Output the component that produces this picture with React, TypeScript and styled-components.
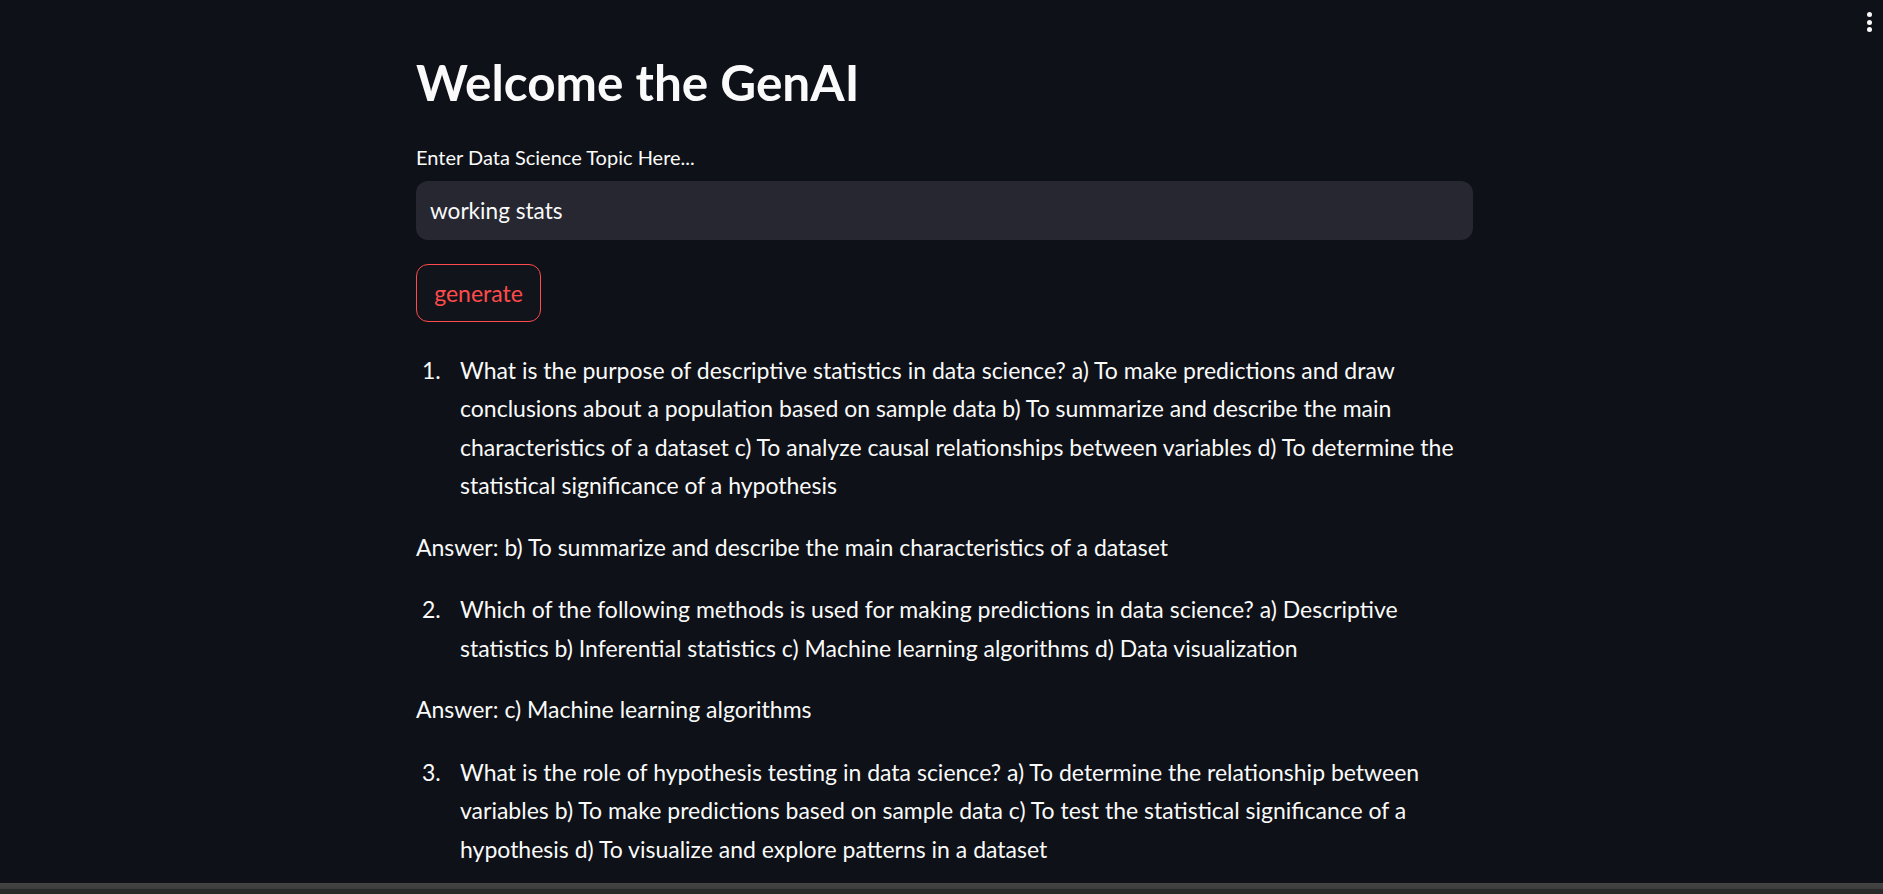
import React from "react";
import styled, { createGlobalStyle } from "styled-components";

const Global = createGlobalStyle`
  html, body { margin: 0; padding: 0; background: #0e1117; }
  body { font-family: Lato, "Noto Sans", sans-serif; color: #fafafa; overflow: hidden; }
  * { box-sizing: border-box; }
`;

const Page = styled.div`
  display: flex;
  flex-direction: column;
  height: 100vh;
  background: #0e1117;
`;

const Main = styled.main`
  flex: 1;
  overflow: hidden;
  position: relative;
`;

const Container = styled.div`
  width: 1057px;
  margin-left: calc(50% - 526.5px + 1px);
  padding-top: 50px;
`;

const Title = styled.h1`
  margin: 0;
  font-size: 49.5px;
  line-height: 65px;
  font-weight: 700;
`;

const Label = styled.label`
  display: block;
  margin-top: 28px;
  font-size: 20px;
  line-height: 28px;
`;

const Input = styled.input`
  display: block;
  width: 100%;
  height: 59px;
  margin-top: 10px;
  border: none;
  outline: none;
  border-radius: 12px;
  background: #262730;
  color: #fafafa;
  font-family: inherit;
  font-size: 22.6px;
  padding: 0 14px;
`;

const Button = styled.button`
  display: block;
  width: 125px;
  height: 58px;
  margin-top: 24px;
  border: 1px solid #ff4b4b;
  border-radius: 12px;
  background: #11141a;
  color: #ff4b4b;
  font-family: inherit;
  font-size: 23px;
  padding: 0;
`;

const List = styled.ol`
  margin: 0;
  padding: 0;
  list-style: none;
`;

const Item = styled.li`
  display: grid;
  grid-template-columns: 44px 1fr;
  font-size: 23px;
  line-height: 38.5px;
`;

const Num = styled.span`
  padding-left: 6px;
`;

const Para = styled.p<{ $top: number }>`
  margin: ${(p) => p.$top}px 0 0;
  font-size: 23px;
  line-height: 38.5px;
`;

const Block = styled.div<{ $top: number }>`
  margin-top: ${(p) => p.$top}px;
`;

const Menu = styled.div`
  position: absolute;
  top: 12px;
  right: 11px;
  display: flex;
  flex-direction: column;
  gap: 2.5px;
`;

const Dot = styled.span`
  width: 5px;
  height: 5px;
  border-radius: 50%;
  background: #fafafa;
`;

const HScroll = styled.div`
  height: 11px;
  flex: none;
  background: linear-gradient(#454545 0, #3d3d3d 6px, #2a2a2a 6px, #2a2a2a 100%);
`;

const items = [
  {
    n: 1,
    q: "What is the purpose of descriptive statistics in data science? a) To make predictions and draw conclusions about a population based on sample data b) To summarize and describe the main characteristics of a dataset c) To analyze causal relationships between variables d) To determine the statistical significance of a hypothesis",
    a: "Answer: b) To summarize and describe the main characteristics of a dataset",
  },
  {
    n: 2,
    q: "Which of the following methods is used for making predictions in data science? a) Descriptive statistics b) Inferential statistics c) Machine learning algorithms d) Data visualization",
    a: "Answer: c) Machine learning algorithms",
  },
  {
    n: 3,
    q: "What is the role of hypothesis testing in data science? a) To determine the relationship between variables b) To make predictions based on sample data c) To test the statistical significance of a hypothesis d) To visualize and explore patterns in a dataset",
    a: "",
  },
];

export default function App() {
  return (
    <Page>
      <Global />
      <Main>
        <Menu>
          <Dot />
          <Dot />
          <Dot />
        </Menu>
        <Container>
          <Title>Welcome the GenAI</Title>
          <Label htmlFor="topic">Enter Data Science Topic Here...</Label>
          <Input id="topic" defaultValue="working stats" />
          <Button>generate</Button>
          {items.map((it, i) => (
            <Block key={it.n} $top={i === 0 ? 28.5 : 24}>
              <List start={it.n}>
                <Item>
                  <Num>{it.n}.</Num>
                  <span>{it.q}</span>
                </Item>
              </List>
              {it.a && <Para $top={23}>{it.a}</Para>}
            </Block>
          ))}
        </Container>
      </Main>
      <HScroll />
    </Page>
  );
}
